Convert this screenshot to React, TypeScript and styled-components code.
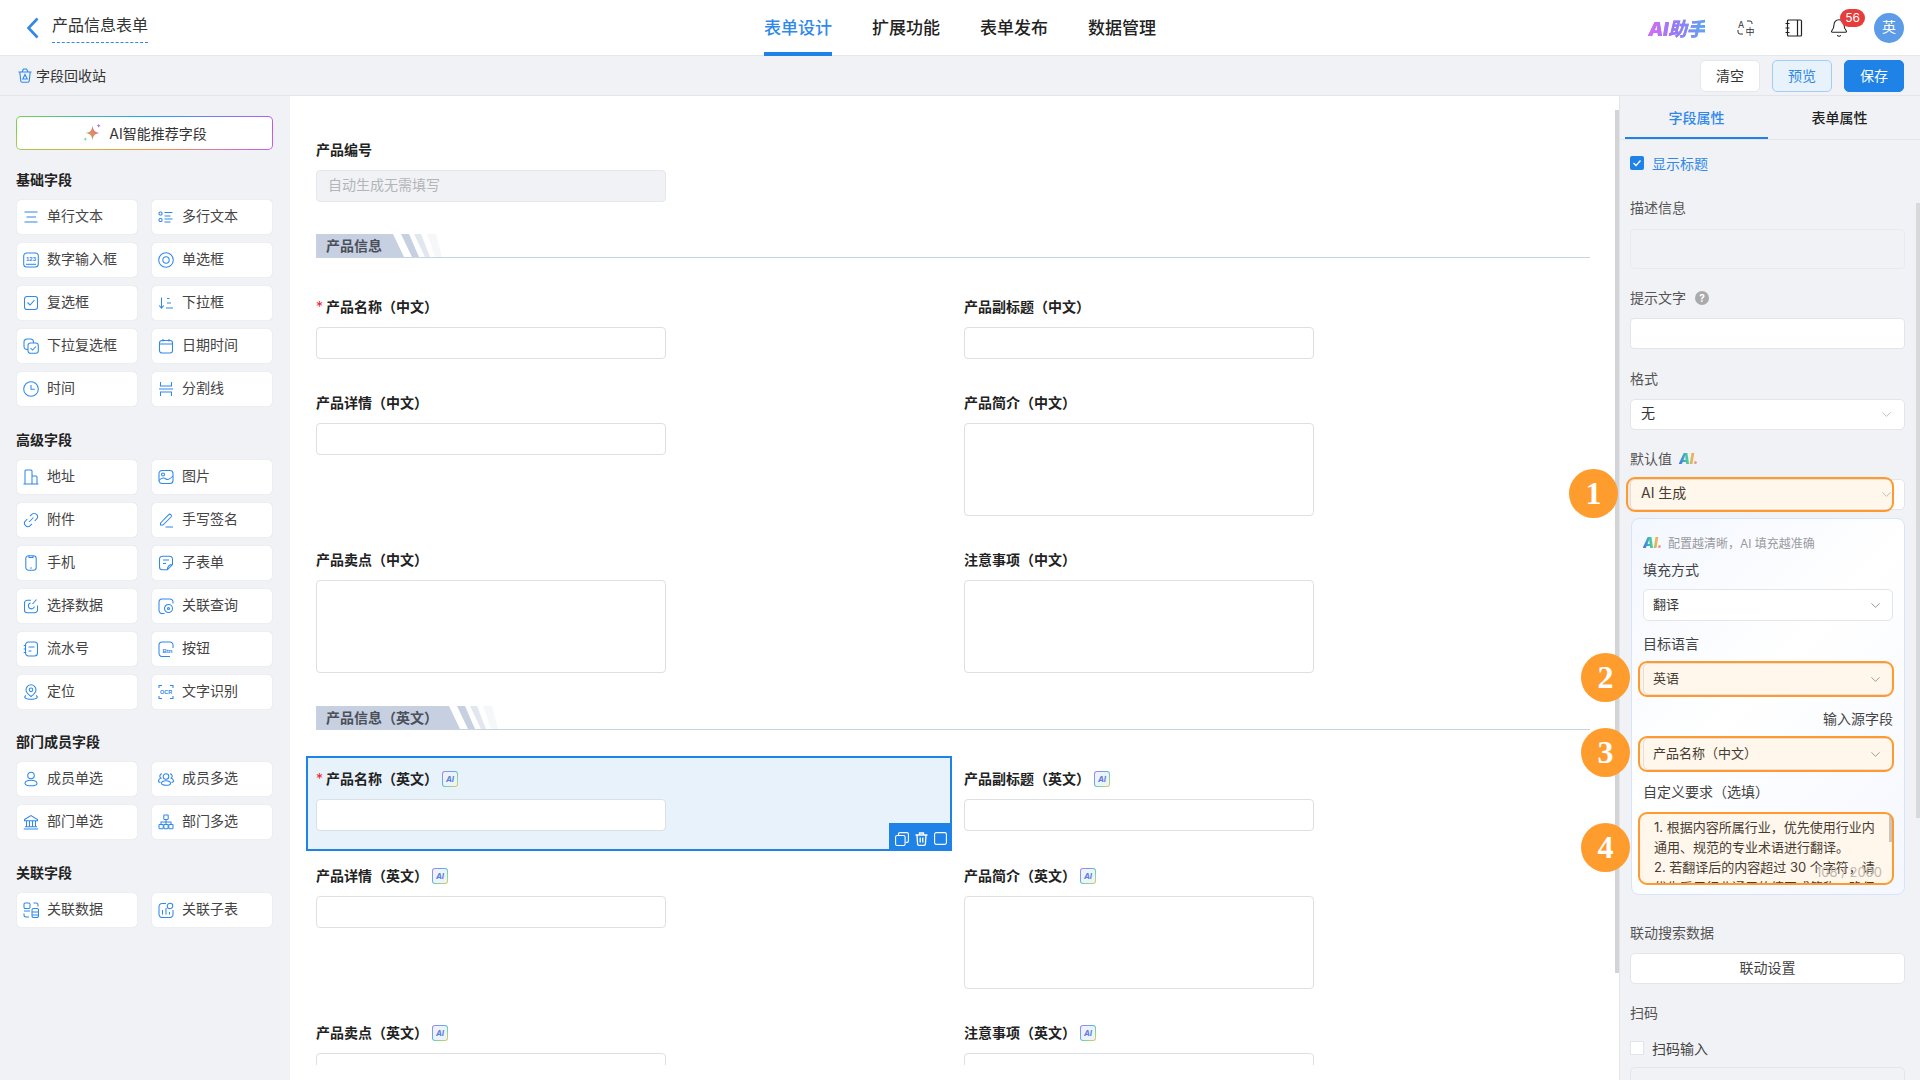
import React from "react";
import styled, { createGlobalStyle } from "styled-components";
import { Bell, ChevronDown } from "lucide-react";

const GlobalStyle = createGlobalStyle`
  html, body {
    margin: 0;
    padding: 0;
    height: 1080px;
    overflow: hidden;
    background: #fff;
  }
  * {
    box-sizing: border-box;
  }
  body {
    font-family: Inter, "Noto Sans CJK SC", sans-serif;
    font-size: 14px;
    color: #333;
  }
`;

const MiniText = styled.text`
  font-family: "Liberation Sans", sans-serif;
  font-weight: 700;
  text-anchor: middle;
  fill: #2f88ea;
  stroke: none;
`;

const GlyphSvg = styled.svg`
  width: 16px;
  height: 16px;
  flex: none;
  fill: none;
  stroke: #2f88ea;
  stroke-width: 1.05;
`;

const Glyph = ({ children }: { children: React.ReactNode }) => (
  <GlyphSvg viewBox="0 0 16 16">{children}</GlyphSvg>
);

type PaletteItem = { label: string; icon: React.ReactNode };

const basicFields: PaletteItem[] = [
  { label: "单行文本", icon: <path d="M1.5 3h13M3.5 8h9.5M1.5 13h13" /> },
  {
    label: "多行文本",
    icon: (
      <>
        <rect x="1" y="3" width="3" height="3" rx="1" />
        <rect x="1" y="9.5" width="3" height="3" rx="1" />
        <path d="M6.5 3.5h8M6.5 7h6M6.5 10h8M6.5 13h6" />
      </>
    ),
  },
  {
    label: "数字输入框",
    icon: (
      <>
        <rect x="0.7" y="1" width="14.6" height="14" rx="3" />
        <path d="M3 12.3h10" />
        <MiniText x="8" y="9" fontSize="6">123</MiniText>
      </>
    ),
  },
  {
    label: "单选框",
    icon: (
      <>
        <circle cx="8" cy="8" r="7.3" />
        <circle cx="8" cy="8" r="3.2" />
      </>
    ),
  },
  {
    label: "复选框",
    icon: (
      <>
        <rect x="1.5" y="1.5" width="13" height="13" rx="2.5" />
        <path d="M4.5 7.5l2.6 2.5 4.4-5" />
      </>
    ),
  },
  { label: "下拉框", icon: <path d="M3.5 2.5v10.5M1.2 10.5l2.3 2.6 2.3-2.6M9 3.5h2.5M9 8h4M8 13h7" /> },
  {
    label: "下拉复选框",
    icon: (
      <>
        <path d="M5 11.5H4A3 3 0 011 8.5V4a3 3 0 013-3h3.5a3 3 0 013 3v1" />
        <rect x="5" y="5" width="10.3" height="10.3" rx="2.5" />
        <path d="M7.5 10l2 2 3.5-3.5" />
      </>
    ),
  },
  {
    label: "日期时间",
    icon: (
      <>
        <rect x="1.5" y="2.5" width="13" height="12.5" rx="2.5" />
        <path d="M1.5 6h13M5 1v2.500M11 1v2.500" />
      </>
    ),
  },
  {
    label: "时间",
    icon: (
      <>
        <circle cx="8" cy="8" r="7.3" />
        <path d="M8 4v4.300h3.800" />
      </>
    ),
  },
  { label: "分割线", icon: <path d="M2.5 1v4h11V1M1 8h14M2.5 15v-4h11v4" /> },
];

const advancedFields: PaletteItem[] = [
  { label: "地址", icon: <path d="M0.5 15h15M2 15V2a1 1 0 011-1h5a1 1 0 011 1v13M9 7h4a1 1 0 011 1v7" /> },
  {
    label: "图片",
    icon: (
      <>
        <rect x="1" y="1.5" width="14" height="13" rx="3" />
        <circle cx="5" cy="5.5" r="1.5" />
        <path d="M1 11.5c3-3.500 5-3 7-1.500s4 0 7-3" />
      </>
    ),
  },
  {
    label: "附件",
    icon: <path d="M6 10l4.500-4.500M7 4.200l1.800-1.800a3.300 3.300 0 014.700 4.700L11.700 9M9 11.800L7.200 13.600a3.300 3.300 0 01-4.700-4.700L4.300 7" />,
  },
  { label: "手写签名", icon: <path d="M2.5 11L10.5 2.8a1.6 1.6 0 012.5 2.2L5 13H2.5zM7.5 15H15" /> },
  {
    label: "手机",
    icon: (
      <>
        <rect x="2.8" y="0.8" width="10.4" height="14.4" rx="2.8" />
        <path d="M6 1v1.500h4V1M7.2 13h1.600" />
      </>
    ),
  },
  {
    label: "子表单",
    icon: <path d="M14.5 9.5V4A2.8 2.8 0 0011.7 1.2H4.3A2.8 2.8 0 001.5 4v8a2.8 2.8 0 002.8 2.8h5zM5 5h6M5 8.5h3M14.5 9.5c-3 0-5 2-5.2 5.3" />,
  },
  {
    label: "选择数据",
    icon: <path d="M14.5 7.5V12a2.8 2.8 0 01-2.8 2.8H4.3A2.8 2.8 0 011.5 12V5a2.8 2.8 0 012.8-2.8H8M11.3 8.5a3 3 0 11-3.8-3.5M13.5 1.5L9.5 6" />,
  },
  {
    label: "关联查询",
    icon: (
      <>
        <path d="M15 5.5V4a3 3 0 00-3-3H4a3 3 0 00-3 3v8.5a3 3 0 003 3h2.500" />
        <circle cx="10.5" cy="10.5" r="4" />
        <circle cx="10.5" cy="10.5" r="1" />
      </>
    ),
  },
  {
    label: "流水号",
    icon: (
      <>
        <rect x="2.5" y="1" width="12" height="14" rx="3" />
        <path d="M5.5 6h6M5.5 10h3M0.7 4.5h2.500M0.7 8h2.500M0.7 11.5h2.500" />
      </>
    ),
  },
  {
    label: "按钮",
    icon: (
      <>
        <path d="M15 7V4a3 3 0 00-3-3H4a3 3 0 00-3 3v8.5a3 3 0 003 3h8" />
        <MiniText x="9.5" y="12" fontSize="6">Btn</MiniText>
      </>
    ),
  },
  {
    label: "定位",
    icon: (
      <>
        <path d="M8 12.5S3 9 3 5.8a5 5 0 0110 0C13 9 8 12.5 8 12.5z" />
        <circle cx="8" cy="5.8" r="1.8" />
        <path d="M3 11.5C0.5 13 1.5 15.3 8 15.3s7.500-2.300 5-3.800" />
      </>
    ),
  },
  {
    label: "文字识别",
    icon: (
      <>
        <path d="M1 4V1.5h3M12 1.5h3V4M1 12v2.500h3M12 14.500h3V12" />
        <MiniText x="8" y="10" fontSize="5.5">OCR</MiniText>
      </>
    ),
  },
];

const memberFields: PaletteItem[] = [
  {
    label: "成员单选",
    icon: (
      <>
        <circle cx="8" cy="4.5" r="3.3" />
        <path d="M2 12.5c0-2.500 3-3.200 6-3.200s6 .7 6 3.200c0 1.500-2.800 2.300-6 2.300s-6-.8-6-2.300z" />
      </>
    ),
  },
  {
    label: "成员多选",
    icon: (
      <>
        <circle cx="8" cy="5.5" r="2.8" />
        <path d="M3.5 12.5c0-2 2-2.800 4.500-2.800s4.500.8 4.500 2.800c0 1-2 1.800-4.500 1.800s-4.500-.8-4.500-1.800zM4 2.800a2.300 2.300 0 00-1 4.300c-1.500.5-2.500 1.500-2.500 3 0 .8.800 1.300 2 1.500M12 2.800a2.300 2.300 0 011 4.300c1.500.5 2.500 1.500 2.500 3 0 .8-.8 1.300-2 1.500" />
      </>
    ),
  },
  { label: "部门单选", icon: <path d="M1.5 5.5L8 1.5l6.5 4v1.300h-13zM3.500 6.800v6M6.500 6.800v6M9.500 6.800v6M12.500 6.800v6M2 12.800h12M0.800 15h14.400" /> },
  {
    label: "部门多选",
    icon: (
      <>
        <rect x="5.8" y="1" width="4.4" height="4.4" rx="0.6" />
        <rect x="1" y="10.5" width="4.2" height="4.2" rx="0.6" />
        <rect x="5.9" y="10.5" width="4.2" height="4.2" rx="0.6" />
        <rect x="10.8" y="10.5" width="4.2" height="4.2" rx="0.6" />
        <path d="M8 5.5v5M3 10.5V8h10v2.500" />
      </>
    ),
  },
];

const relationFields: PaletteItem[] = [
  {
    label: "关联数据",
    icon: (
      <>
        <rect x="1" y="1" width="6" height="5.5" rx="1.2" />
        <path d="M1 9h6M10.5 1H13a2 2 0 012 2v1.500M1 11.5V13a2 2 0 002 2h3" />
        <rect x="9" y="6.5" width="6.5" height="9" rx="1.5" />
        <path d="M9 10h6.500M9 13h6.500" />
      </>
    ),
  },
  {
    label: "关联子表",
    icon: (
      <>
        <path d="M8 1.5H4A3 3 0 001 4.5v8A3 3 0 004 15.5h8a3 3 0 003-3V8" />
        <path d="M4.5 12.5V8M8 12.5V6M11.5 12.5V10" />
        <circle cx="12" cy="4" r="2.8" />
      </>
    ),
  },
];

const Palette = ({ items }: { items: PaletteItem[] }) => (
  <PaletteGrid>
    {items.map((item) => (
      <PaletteCard key={item.label}>
        <Glyph>{item.icon}</Glyph>
        <PaletteText>{item.label}</PaletteText>
      </PaletteCard>
    ))}
  </PaletteGrid>
);

const SectionTitle = ({ title, top }: { title: string; top: number }) => (
  <SectionBar $top={top}>
    <SectionTab>{title}</SectionTab>
    <SectionStripes viewBox="0 0 60 23">
      <polygon points="8,0 16,0 26,23 19,23" fill="#c6d0e0" />
      <polygon points="21,0 28,0 37,23 32,23" fill="#c6d0e0" opacity="0.5" />
      <polygon points="34,0 43,0 49,23 42,23" fill="#c6d0e0" opacity="0.18" />
    </SectionStripes>
  </SectionBar>
);

type FieldProps = {
  label: string;
  required?: boolean;
  ai?: boolean;
  area?: boolean;
  selected?: boolean;
};

const FormField = ({ label, required, ai, area, selected }: FieldProps) => (
  <FieldCell $selected={selected}>
    <FieldLabel>
      {required && <Required>*</Required>}
      {label}
      {ai && (
        <AiChip>
          <AiChipText>AI</AiChipText>
        </AiChip>
      )}
    </FieldLabel>
    {area ? <FieldArea /> : <FieldInput />}
    {selected && (
      <ActionBar>
        <svg width="14" height="14" viewBox="0 0 14 14" fill="none" stroke="#fff" strokeWidth="1.1">
          <rect x="0.6" y="3.5" width="9.5" height="10" rx="1.5" />
          <path d="M3.5 3.5V2a1.4 1.4 0 011.4-1.4h7A1.4 1.4 0 0113.4 2v7a1.4 1.4 0 01-1.4 1.4h-1.300" />
        </svg>
        <svg width="13" height="14" viewBox="0 0 13 14" fill="none" stroke="#fff" strokeWidth="1.3">
          <path d="M0.5 3h12M4.5 3V1h4v2M2 3l.6 9a1.300 1.300 0 001.300 1.300h5.200a1.300 1.300 0 001.300-1.300L11 3M5.200 5.500v5M7.800 5.500v5" />
        </svg>
        <svg width="13" height="13" viewBox="0 0 13 13" fill="none" stroke="#fff" strokeWidth="1.1">
          <rect x="0.6" y="0.6" width="11.8" height="11.8" rx="1.6" />
        </svg>
      </ActionBar>
    )}
  </FieldCell>
);

const Marker = ({ n, left, right }: { n: number; left: number; right: number }) => (
  <Ring $left={left} $right={right}>
    <NumberBadge>{n}</NumberBadge>
  </Ring>
);

const Select = ({ value, inner }: { value: string; inner?: boolean }) => (
  <SelectBox $inner={inner}>
    <SelectValue>{value}</SelectValue>
    <ChevronDown size={15} strokeWidth={1.2} color={inner ? "#777" : "#aaa"} />
  </SelectBox>
);

export default function App() {
  return (
    <Page>
      <GlobalStyle />
      <Header>
        <TitleBlock>
          <svg width="13" height="22" viewBox="0 0 13 22" fill="none" stroke="#2f88ea" strokeWidth="2.6">
            <path d="M11.5 1.5L2.5 11l9 9.500" />
          </svg>
          <FormTitle>产品信息表单</FormTitle>
        </TitleBlock>
        <NavTabs>
          <NavTab $active>表单设计</NavTab>
          <NavTab>扩展功能</NavTab>
          <NavTab>表单发布</NavTab>
          <NavTab>数据管理</NavTab>
        </NavTabs>
        <HeaderRight>
          <AssistantLogo>AI助手</AssistantLogo>
          <IconSlot $ml={26}>
            <svg width="20" height="18" viewBox="0 0 20 18" fill="none" stroke="#333" strokeWidth="1">
              <HeaderGlyph x="5" y="8.5" fontSize="9">A</HeaderGlyph>
              <HeaderGlyph x="14" y="16" fontSize="9">中</HeaderGlyph>
              <path d="M11 2h3a2 2 0 012 2v1M2 11v2a2 2 0 002 2h3" />
            </svg>
          </IconSlot>
          <IconSlot $ml={18}>
            <svg width="18" height="18" viewBox="0 0 18 18" fill="none" stroke="#222" strokeWidth="1.2">
              <rect x="2.5" y="1" width="14" height="16" rx="1" />
              <path d="M12.5 1v16M0.5 4.500h4M0.5 9h4M0.5 13.500h4" />
            </svg>
          </IconSlot>
          <IconSlot $ml={15}>
            <Bell size={20} strokeWidth={1.3} color="#222" />
            <CountBadge>56</CountBadge>
          </IconSlot>
          <Avatar>英</Avatar>
        </HeaderRight>
      </Header>

      <SubBar>
        <RecycleLink>
          <svg width="14" height="15" viewBox="0 0 14 15" fill="none" stroke="#2f88ea" strokeWidth="1.1">
            <path d="M0.5 4h13M4 4l1.500-3h3L10 4M1.800 4l1 9a1.300 1.300 0 001.300 1.200h5.800a1.300 1.300 0 001.300-1.200l1-9M7 6.500L4.800 11h4.400z" />
          </svg>
          字段回收站
        </RecycleLink>
        <SubActions>
          <ActionButton>清空</ActionButton>
          <ActionButton $variant="soft">预览</ActionButton>
          <ActionButton $variant="primary">保存</ActionButton>
        </SubActions>
      </SubBar>

      <Body>
        <LeftPanel>
          <RecommendButton>
            <svg width="20" height="20" viewBox="0 0 18 18">
              <defs>
                <linearGradient id="spark" x1="0" y1="1" x2="1" y2="0">
                  <stop offset="0" stopColor="#3fd6a0" />
                  <stop offset="0.5" stopColor="#f2875a" />
                  <stop offset="1" stopColor="#7a5cf0" />
                </linearGradient>
              </defs>
              <path d="M9.5 2.500c.7 4.500 2.200 6 6.500 6.500-4.300.5-5.800 2-6.500 6.500C8.800 11 7.300 9.500 3 9c4.300-.5 5.800-2 6.500-6.500z" fill="url(#spark)" />
              <path d="M15 0.500c.2 1.300.7 1.800 2 2-1.300.2-1.800.7-2 2-.2-1.300-.7-1.800-2-2 1.300-.2 1.800-.7 2-2z" fill="#a86cf0" />
              <path d="M3 12.500c.2 1.300.7 1.800 2 2-1.300.2-1.800.7-2 2-.2-1.300-.7-1.800-2-2 1.300-.2 1.800-.7 2-2z" fill="#6fdc9a" />
            </svg>
            AI智能推荐字段
          </RecommendButton>
          <GroupHeading $top={20}>基础字段</GroupHeading>
          <Palette items={basicFields} />
          <GroupHeading $top={24}>高级字段</GroupHeading>
          <Palette items={advancedFields} />
          <GroupHeading $top={23}>部门成员字段</GroupHeading>
          <Palette items={memberFields} />
          <GroupHeading $top={24}>关联字段</GroupHeading>
          <Palette items={relationFields} />
        </LeftPanel>

        <Canvas>
          <CanvasScroll>
            <FieldRows>
              <DisabledCell>
                <FieldLabel>产品编号</FieldLabel>
                <DisabledInput>自动生成无需填写</DisabledInput>
              </DisabledCell>
            </FieldRows>
            <SectionTitle title="产品信息" top={10} />
            <FieldRows>
              <FormField label="产品名称（中文）" required />
              <FormField label="产品副标题（中文）" />
              <FormField label="产品详情（中文）" />
              <FormField label="产品简介（中文）" area />
              <FormField label="产品卖点（中文）" area />
              <FormField label="注意事项（中文）" area />
            </FieldRows>
            <SectionTitle title="产品信息（英文）" top={12} />
            <FieldRows>
              <FormField label="产品名称（英文）" required ai selected />
              <FormField label="产品副标题（英文）" ai />
              <FormField label="产品详情（英文）" ai />
              <FormField label="产品简介（英文）" ai area />
              <FormField label="产品卖点（英文）" ai area />
              <FormField label="注意事项（英文）" ai area />
            </FieldRows>
          </CanvasScroll>
          <CanvasScrollbar />
        </Canvas>

        <RightPanel>
          <PropTabs>
            <PropTab $active>字段属性</PropTab>
            <PropTab>表单属性</PropTab>
          </PropTabs>
          <PropBody>
            <CheckRow>
              <CheckedBox>
                <svg width="10" height="10" viewBox="0 0 10 10" fill="none" stroke="#fff" strokeWidth="1.3">
                  <path d="M1.5 5l2.500 2.500 4.500-5" />
                </svg>
              </CheckedBox>
              显示标题
            </CheckRow>
            <PropLabel $top={25}>描述信息</PropLabel>
            <MutedBox />
            <PropLabel $top={19}>
              提示文字
              <HelpDot>?</HelpDot>
            </PropLabel>
            <PlainBox />
            <PropLabel $top={20}>格式</PropLabel>
            <Select value="无" />
            <PropLabel $top={19}>
              默认值
              <AiMark>AI.</AiMark>
            </PropLabel>
            <Marked>
              <Select value="AI 生成" />
              <Marker n={1} left={-4} right={11} />
            </Marked>
            <AiPanel>
              <AiHint>
                <AiMark>AI.</AiMark>
                配置越清晰，AI 填充越准确
              </AiHint>
              <InnerLabel $top={8}>填充方式</InnerLabel>
              <Select value="翻译" inner />
              <InnerLabel $top={13}>目标语言</InnerLabel>
              <Marked>
                <Select value="英语" inner />
                <Marker n={2} left={-5} right={-1} />
              </Marked>
              <InnerLabel $top={14} $right>输入源字段</InnerLabel>
              <Marked>
                <Select value="产品名称（中文）" inner />
                <Marker n={3} left={-5} right={-1} />
              </Marked>
              <InnerLabel $top={12}>自定义要求（选填）</InnerLabel>
              <Marked>
                <PromptBox>
                  1. 根据内容所属行业，优先使用行业内通用、规范的专业术语进行翻译。
                  <br />
                  2. 若翻译后的内容超过 30 个字符，请优先采用行业通用的缩写或简称，确保
                  <PromptThumb />
                  <PromptCount>108 / 2000</PromptCount>
                </PromptBox>
                <Marker n={4} left={-5} right={-1} />
              </Marked>
            </AiPanel>
            <PropLabel $top={28}>联动搜索数据</PropLabel>
            <LinkButton>联动设置</LinkButton>
            <PropLabel $top={19}>扫码</PropLabel>
            <ScanRow>
              <EmptyBox />
              扫码输入
            </ScanRow>
            <ClippedBox />
          </PropBody>
          <PropScrollbar />
        </RightPanel>
      </Body>
    </Page>
  );
}

const Page = styled.div`
  width: 1920px;
  height: 1080px;
  overflow: hidden;
  display: flex;
  flex-direction: column;
`;

const Header = styled.header`
  height: 56px;
  flex: none;
  display: flex;
  align-items: stretch;
  background: #fff;
  border-bottom: 1px solid #e6e7ea;
`;

const TitleBlock = styled.div`
  width: 764px;
  padding-left: 26px;
  display: flex;
  align-items: center;
  gap: 13px;
`;

const FormTitle = styled.div`
  font-size: 16px;
  line-height: 24px;
  height: 30px;
  color: #333;
  border-bottom: 1px dashed #2f88ea;
`;

const NavTabs = styled.nav`
  display: flex;
  gap: 40px;
`;

const NavTab = styled.div<{ $active?: boolean }>`
  height: 56px;
  line-height: 57px;
  font-size: 17px;
  font-weight: 500;
  color: ${(p) => (p.$active ? "#2f88ea" : "#222")};
  border-bottom: 4px solid ${(p) => (p.$active ? "#1e82e6" : "transparent")};
`;

const HeaderRight = styled.div`
  margin-left: auto;
  padding-right: 16px;
  display: flex;
  align-items: center;
`;

const AssistantLogo = styled.div`
  font-size: 19px;
  font-weight: 900;
  font-style: italic;
  letter-spacing: -0.5px;
  background: linear-gradient(90deg, #d96cf2, #9a78f6 45%, #58a8f0);
  -webkit-background-clip: text;
  background-clip: text;
  color: transparent;
  filter: drop-shadow(0.5px 0 0 #a98af4);
`;

const IconSlot = styled.div<{ $ml: number }>`
  position: relative;
  width: 30px;
  height: 30px;
  margin-left: ${(p) => p.$ml}px;
  display: flex;
  align-items: center;
  justify-content: center;
`;

const HeaderGlyph = styled.text`
  font-family: Inter, "Noto Sans CJK SC", sans-serif;
  text-anchor: middle;
  fill: #333;
  stroke: none;
`;

const CountBadge = styled.span`
  position: absolute;
  left: 16px;
  top: -4px;
  width: 25px;
  height: 18px;
  border-radius: 9px;
  background: #e53c3c;
  color: #fff;
  font-size: 12px;
  line-height: 18px;
  text-align: center;
`;

const Avatar = styled.div`
  width: 30px;
  height: 30px;
  margin-left: 20px;
  border-radius: 50%;
  background: #5b9be8;
  color: #fff;
  font-size: 14px;
  line-height: 28px;
  text-align: center;
`;

const SubBar = styled.div`
  height: 40px;
  flex: none;
  display: flex;
  align-items: center;
  justify-content: space-between;
  padding: 0 16px 0 18px;
  background: #f1f2f5;
  border-bottom: 1px solid #e4e5e8;
`;

const RecycleLink = styled.div`
  display: flex;
  align-items: center;
  gap: 4px;
  color: #333;
  line-height: 20px;
`;

const SubActions = styled.div`
  display: flex;
  gap: 12px;
`;

const ActionButton = styled.div<{ $variant?: "soft" | "primary" }>`
  width: 60px;
  height: 32px;
  line-height: 30px;
  text-align: center;
  border-radius: 5px;
  border: 1px solid
    ${(p) => (p.$variant === "soft" ? "#a3cdf5" : p.$variant === "primary" ? "#1e82e6" : "#e6e7ea")};
  background: ${(p) => (p.$variant === "soft" ? "#e8f2fb" : p.$variant === "primary" ? "#1e82e6" : "#fff")};
  color: ${(p) => (p.$variant === "soft" ? "#2f88ea" : p.$variant === "primary" ? "#fff" : "#333")};
`;

const Body = styled.div`
  flex: 1;
  min-height: 0;
  display: flex;
`;

const LeftPanel = styled.aside`
  width: 290px;
  flex: none;
  padding: 20px 0 0 17px;
  background: #f1f2f5;
`;

const RecommendButton = styled.div`
  width: 257px;
  height: 34px;
  margin-left: -1px;
  display: flex;
  align-items: center;
  justify-content: center;
  gap: 7px;
  border: 1px solid transparent;
  border-radius: 5px;
  background:
    linear-gradient(#fff, #fff) padding-box,
    linear-gradient(90deg, #79d24b, #18a8f0 50%, #b85cf0) top / 100% 50% no-repeat border-box,
    linear-gradient(90deg, #9ccf4a, #f59a3c 50%, #c75cf0) bottom / 100% 50% no-repeat border-box;
`;

const GroupHeading = styled.div<{ $top: number }>`
  margin: ${(p) => p.$top}px 0 10px -1px;
  height: 20px;
  line-height: 20px;
  font-weight: 700;
  color: #222;
`;

const PaletteGrid = styled.div`
  display: grid;
  grid-template-columns: 120px 120px;
  grid-auto-rows: 34px;
  gap: 9px 15px;
`;

const PaletteCard = styled.div`
  display: flex;
  align-items: center;
  gap: 8px;
  padding-left: 6px;
  background: #fff;
  border-radius: 4px;
  box-shadow: 0 0 1px rgba(0, 0, 0, 0.18);
  color: #444;
`;

const PaletteText = styled.span`
  line-height: 20px;
  margin-top: -2px;
`;

const Canvas = styled.main`
  position: relative;
  flex: 1;
  min-width: 0;
  background: #fff;
`;

const CanvasScroll = styled.div`
  height: 969px;
  overflow: hidden;
  padding: 31px 0 0 16px;
`;

const CanvasScrollbar = styled.div`
  position: absolute;
  top: 14px;
  right: 0;
  width: 4px;
  height: 863px;
  background: #d3d4d6;
`;

const FieldRows = styled.div`
  display: grid;
  grid-template-columns: 646px 646px;
  column-gap: 2px;
  align-items: start;
`;

const SectionBar = styled.div<{ $top: number }>`
  width: 1274px;
  height: 24px;
  margin: ${(p) => p.$top}px 0 26px 10px;
  display: flex;
  border-bottom: 1px solid #c9d3df;
`;

const SectionTab = styled.div`
  height: 23px;
  padding: 0 22px 0 10px;
  line-height: 23px;
  font-weight: 700;
  color: #4a4f5a;
  background: #c6d0e0;
  clip-path: polygon(0 0, calc(100% - 11px) 0, 100% 100%, 0 100%);
`;

const SectionStripes = styled.svg`
  width: 60px;
  height: 23px;
  margin-left: -11px;
`;

const FieldCell = styled.div<{ $selected?: boolean }>`
  position: relative;
  padding: 13px 10px ${(p) => (p.$selected ? 20 : 21)}px;
  margin-bottom: ${(p) => (p.$selected ? 2 : 0)}px;
  background: ${(p) => (p.$selected ? "#e8f2fb" : "transparent")};
  box-shadow: ${(p) => (p.$selected ? "inset 0 0 0 2px #1e82e6" : "none")};
`;

const DisabledCell = styled(FieldCell)`
  padding-bottom: 22px;
`;

const FieldLabel = styled.div`
  height: 20px;
  line-height: 20px;
  margin-bottom: 10px;
  display: flex;
  align-items: center;
  font-weight: 700;
  color: #222;
`;

const Required = styled.span`
  width: 10px;
  color: #f5222d;
  font-weight: 400;
`;

const AiChip = styled.span`
  width: 16px;
  height: 16px;
  margin-left: 4px;
  border: 1px solid transparent;
  border-radius: 3px;
  background:
    linear-gradient(#eef2fb, #eef2fb) padding-box,
    linear-gradient(135deg, #b07cf0, #5ab0f0 40%, #7edc8a 70%, #f2c26a) border-box;
  display: flex;
  align-items: center;
  justify-content: center;
`;

const AiChipText = styled.span`
  font-size: 8px;
  line-height: 10px;
  font-style: italic;
  font-weight: 700;
  color: #5b7de0;
`;

const FieldInput = styled.div`
  width: 350px;
  height: 32px;
  background: #fff;
  border: 1px solid #dcdfe4;
  border-radius: 4px;
`;

const FieldArea = styled(FieldInput)`
  height: 93px;
`;

const DisabledInput = styled(FieldInput)`
  padding-left: 11px;
  line-height: 28px;
  color: #b4b5b8;
  background: #f1f2f5;
  border-color: #e6e7ea;
`;

const ActionBar = styled.div`
  position: absolute;
  right: 0;
  bottom: 0;
  width: 63px;
  height: 28px;
  padding: 3px 0 0 6px;
  display: flex;
  align-items: center;
  gap: 6px;
  background: #1e82e6;
`;

const RightPanel = styled.aside`
  position: relative;
  width: 301px;
  flex: none;
  background: #f1f2f5;
  border-left: 1px solid #e4e5e8;
`;

const PropTabs = styled.div`
  height: 44px;
  padding-left: 5px;
  display: flex;
  border-bottom: 1px solid #e4e5e8;
`;

const PropTab = styled.div<{ $active?: boolean }>`
  width: 143px;
  height: 43px;
  line-height: 44px;
  text-align: center;
  font-weight: 500;
  color: ${(p) => (p.$active ? "#2f88ea" : "#222")};
  border-bottom: 2px solid ${(p) => (p.$active ? "#1e82e6" : "transparent")};
`;

const PropBody = styled.div`
  padding: 13px 15px 0 10px;
`;

const CheckRow = styled.div`
  height: 20px;
  display: flex;
  align-items: center;
  gap: 8px;
  color: #2f88ea;
`;

const CheckedBox = styled.span`
  width: 14px;
  height: 14px;
  border-radius: 2px;
  background: #1e82e6;
  display: flex;
  align-items: center;
  justify-content: center;
`;

const PropLabel = styled.div<{ $top: number }>`
  height: 20px;
  line-height: 20px;
  margin: ${(p) => p.$top}px 0 10px;
  display: flex;
  align-items: center;
  color: #555;
`;

const HelpDot = styled.span`
  width: 14px;
  height: 14px;
  margin-left: 9px;
  border-radius: 50%;
  background: #a9aaac;
  color: #fff;
  font-size: 10px;
  font-weight: 700;
  line-height: 14px;
  text-align: center;
`;

const AiMark = styled.span`
  margin-left: 7px;
  font-size: 14px;
  font-weight: 900;
  font-style: italic;
  letter-spacing: -0.5px;
  background: linear-gradient(90deg, #4f6cf0, #3dc9a8 40%, #f2b84a 70%, #e66ac0);
  -webkit-background-clip: text;
  background-clip: text;
  color: transparent;
`;

const MutedBox = styled.div`
  height: 40px;
  margin-top: 11px;
  border: 1px solid #e9eaed;
  border-radius: 4px;
  background: #f1f2f5;
`;

const PlainBox = styled.div`
  height: 31px;
  background: #fff;
  border: 1px solid #e4e5e8;
  border-radius: 4px;
`;

const SelectBox = styled.div<{ $inner?: boolean }>`
  height: ${(p) => (p.$inner ? 32 : 31)}px;
  display: flex;
  align-items: center;
  justify-content: space-between;
  padding: 0 ${(p) => (p.$inner ? 9 : 10)}px;
  font-size: ${(p) => (p.$inner ? 13 : 14)}px;
  color: #333;
  background: #fff;
  border: 1px solid #e4e5e8;
  border-radius: 5px;
`;

const SelectValue = styled.span`
  line-height: 20px;
  margin-top: -3px;
`;

const Marked = styled.div`
  position: relative;
`;

const Ring = styled.div<{ $left: number; $right: number }>`
  position: absolute;
  top: -2px;
  bottom: -2px;
  left: ${(p) => p.$left}px;
  right: ${(p) => p.$right}px;
  border: 2px solid #ff9a2e;
  border-radius: 9px;
  background: rgba(255, 154, 46, 0.09);
`;

const NumberBadge = styled.div`
  position: absolute;
  left: -59px;
  top: 50%;
  width: 49px;
  height: 49px;
  margin-top: -26px;
  border-radius: 50%;
  background: #ff9c2e;
  color: #fff;
  font-family: "Liberation Serif", serif;
  font-size: 32px;
  font-weight: 700;
  line-height: 49px;
  text-align: center;
`;

const AiPanel = styled.div`
  margin: 8px 0 0 1px;
  height: 377px;
  padding: 13px 11px 0;
  border: 1px solid #d8e4f8;
  border-radius: 8px;
  background: linear-gradient(135deg, #f3f7ff, #ffffff 45%, #f4f7ff);
`;

const AiHint = styled.div`
  height: 20px;
  display: flex;
  align-items: center;
  gap: 6px;
  font-size: 12px;
  color: #9a9b9f;

  ${AiMark} {
    margin-left: 0;
  }
`;

const InnerLabel = styled.div<{ $top: number; $right?: boolean }>`
  height: 20px;
  line-height: 20px;
  margin: ${(p) => p.$top}px 0 9px;
  text-align: ${(p) => (p.$right ? "right" : "left")};
  color: #444;
`;

const PromptBox = styled.div`
  position: relative;
  height: 69px;
  margin-top: 12px;
  padding: 3px 11px 0;
  overflow: hidden;
  font-size: 13px;
  line-height: 20px;
  color: #333;
  background: #fff;
  border-radius: 5px;
`;

const PromptThumb = styled.span`
  position: absolute;
  top: 2px;
  right: 1px;
  width: 3px;
  height: 26px;
  background: #c8c9cb;
`;

const PromptCount = styled.span`
  position: absolute;
  right: 11px;
  top: 50px;
  font-size: 13px;
  line-height: 16px;
  color: #bbbcbe;
`;

const LinkButton = styled.div`
  height: 31px;
  line-height: 28px;
  text-align: center;
  color: #444;
  background: #fff;
  border: 1px solid #e4e5e8;
  border-radius: 5px;
`;

const ScanRow = styled.div`
  height: 20px;
  margin-top: 15px;
  display: flex;
  align-items: center;
  gap: 8px;
  color: #444;
`;

const EmptyBox = styled.span`
  width: 14px;
  height: 14px;
  background: #fff;
  border: 1px solid #e4e5e8;
`;

const ClippedBox = styled.div`
  height: 30px;
  margin-top: 9px;
  border: 1px solid #e4e5e8;
  border-radius: 5px;
`;

const PropScrollbar = styled.div`
  position: absolute;
  top: 107px;
  right: 0;
  width: 4px;
  height: 615px;
  background: #d8d9db;
`;
